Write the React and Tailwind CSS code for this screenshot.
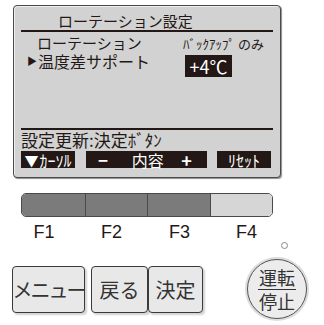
import React from 'react';

function ScreenButton({ className, children }) {
  return (
    <div
      className={`h-[17px] bg-[#231815] text-white flex items-center text-[16px] leading-none whitespace-nowrap ${className}`}
    >
      {children}
    </div>
  );
}

function KeyButton({ className, children }) {
  return (
    <div
      className={`h-[47px] bg-[#e8e8e8] border border-[#3a3a3a] rounded-[4px] shadow-[2px_2px_2px_rgba(0,0,0,0.18)] flex items-center justify-center text-[20px] leading-[24px] text-[#333] whitespace-nowrap ${className}`}
    >
      {children}
    </div>
  );
}

export default function App() {
  return (
    <div className="w-[324px] h-[325px] bg-white overflow-hidden font-['Noto_Sans_CJK_JP',sans-serif] text-[#231815]">
      {/* LCD screen */}
      <div className="ml-[13px] mt-[5px] w-[268px] h-[173px] rounded-[4px] border border-[#4a4a4a] bg-[#d2d2d2] shadow-[1px_1px_1px_rgba(0,0,0,0.45),inset_1px_1px_0_#ededed] flex flex-col">
        <div className="pl-[44px] pt-[6px] text-[15px] leading-[18px]">ローテーション設定</div>
        <div className="mx-[7px] h-[2px] bg-[#231815]" />

        <div className="flex mt-[2px] items-start">
          <div className="w-[169px] pl-[23px] text-[15px] leading-[17px]">ローテーション</div>
          <div className="text-[13px] leading-[17px] mt-[1px]">ﾊﾞｯｸｱｯﾌﾟ のみ</div>
        </div>

        <div className="flex items-start">
          <div className="w-[171px] pl-[13px] text-[16px] leading-[18px] flex items-center">
            <span className="text-[10px] mr-[1px]">▶</span>
            <span>温度差サポート</span>
          </div>
          <div className="mt-[3px] w-[47px] h-[22px] bg-[#231815] text-white text-[18px] leading-[22px] flex items-center justify-center">
            +4℃
          </div>
        </div>

        <div className="flex-1" />
        <div className="mx-[7px] h-[2px] bg-[#231815]" />
        <div className="h-[20px] pl-[7px] text-[17px] leading-[20px] whitespace-nowrap">設定更新:決定ﾎﾞﾀﾝ</div>

        <div className="flex px-[7px] mb-[9px] mt-[1px]">
          <ScreenButton className="w-[54px] justify-center">
            <span className="text-[14px] mr-[1px]">▼</span>
            <span>ｶｰｿﾙ</span>
          </ScreenButton>
          <ScreenButton className="w-[121px] ml-[11px] justify-between pl-[12px] pr-[15px]">
            <span className="font-bold text-[17px]">−</span>
            <span className="text-[16px] ml-[6px]">内容</span>
            <span className="font-bold text-[18px]">+</span>
          </ScreenButton>
          <ScreenButton className="w-[54px] ml-[10px] justify-center">ﾘｾｯﾄ</ScreenButton>
        </div>
      </div>

      {/* Function keys */}
      <div className="ml-[21px] mt-[15px] w-[252px] h-[24px] rounded-[5px] border border-[#4a4a4a] overflow-hidden grid grid-cols-4">
        <div className="bg-[#7b7b7b]" />
        <div className="bg-[#7b7b7b] border-l border-[#4a4a4a]" />
        <div className="bg-[#7b7b7b] border-l border-[#4a4a4a]" />
        <div className="bg-[#d6d6d6] border-l border-[#4a4a4a]" />
      </div>
      <div className="ml-[21px] mt-[6px] w-[252px] grid grid-cols-4 font-['Liberation_Sans',sans-serif] text-[18px] leading-[18px] text-[#231815] text-center">
        <div className="pr-[17px]">F1</div>
        <div className="pr-[8px]">F2</div>
        <div className="pl-[2px]">F3</div>
        <div className="pl-[10px]">F4</div>
      </div>

      {/* Bottom keys */}
      <div className="flex items-start">
        <div className="ml-[12px] mt-[25px] flex">
          <KeyButton className="w-[73px] tracking-[-2px]">メニュー</KeyButton>
          <KeyButton className="w-[57px] ml-[6px]">戻る</KeyButton>
          <KeyButton className="w-[55px]">決定</KeyButton>
        </div>
        <div className="ml-[44px] flex flex-col">
          <div className="ml-[34px] mt-[1px] w-[7px] h-[7px] rounded-full border border-[#888] bg-white" />
          <div className="mt-[10px] w-[60px] h-[60px] rounded-full border border-[#555] bg-[#ececec] shadow-[0_0_0_2px_#dcdcdc] flex flex-col items-center justify-center text-[#333] text-[18px] leading-[21px]">
            <span>運転</span>
            <div className="w-[38px] h-[1px] bg-[#333] my-[1px]" />
            <span>停止</span>
          </div>
        </div>
      </div>
    </div>
  );
}
